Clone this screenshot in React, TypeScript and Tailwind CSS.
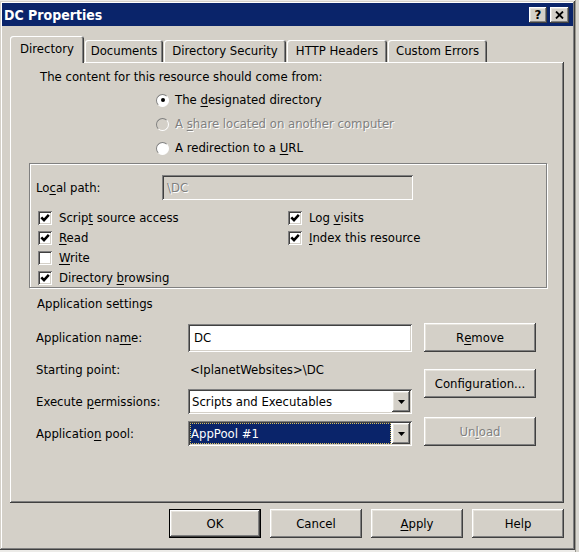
import type { ReactNode } from 'react'

// classic 3D edges
const raised =
  'shadow-[inset_-1px_-1px_0_#404040,inset_1px_1px_0_#ffffff,inset_-2px_-2px_0_#808080,inset_2px_2px_0_#e6e3dc]'
const sunken =
  'shadow-[inset_1px_1px_0_#808080,inset_-1px_-1px_0_#ffffff,inset_2px_2px_0_#404040,inset_-2px_-2px_0_#d4d0c8]'
const disabledText = 'text-[#808080] [text-shadow:1px_1px_0_#ffffff]'

function Key({ children }: { children: ReactNode }) {
  return <span className="underline underline-offset-[2px]">{children}</span>
}

function CheckBox({ checked, children }: { checked: boolean; children: ReactNode }) {
  return (
    <div className="h-5 flex items-center gap-[7px]">
      <span className={`w-[14px] h-[14px] bg-white flex items-center justify-center shrink-0 ${sunken}`}>
        {checked && (
          <svg width="10" height="10" viewBox="0 0 10 10">
            <path d="M1.3 4.3 L4 7.2 L8.8 1.8" stroke="#000" strokeWidth="2.5" fill="none" />
          </svg>
        )}
      </span>
      <span>{children}</span>
    </div>
  )
}

function Radio({ checked, disabled, children }: { checked?: boolean; disabled?: boolean; children: ReactNode }) {
  return (
    <div className="h-5 flex items-center gap-[6px] pl-[146px]">
      <span
        className={`w-[13px] h-[13px] rounded-full flex items-center justify-center shrink-0 border border-t-[#808080] border-l-[#808080] border-r-white border-b-white ${
          disabled ? 'bg-[#d4d0c8]' : 'bg-white'
        }`}
      >
        {checked && <span className="w-[4px] h-[4px] rounded-full bg-black" />}
      </span>
      <span className={disabled ? disabledText : ''}>{children}</span>
    </div>
  )
}

function Button({
  children,
  w = 'w-[92px]',
  isDefault,
  disabled,
}: {
  children: ReactNode
  w?: string
  isDefault?: boolean
  disabled?: boolean
}) {
  return (
    <div
      className={`${w} h-[29px] flex items-center justify-center bg-[#d4d0c8] ${
        isDefault ? 'border border-black' : ''
      } ${raised} ${disabled ? disabledText : ''}`}
    >
      {children}
    </div>
  )
}

function DropArrow() {
  return (
    <div className={`w-[18px] h-full flex items-center justify-center bg-[#d4d0c8] ${raised}`}>
      <svg width="7" height="4" viewBox="0 0 7 4">
        <path d="M0 0 H7 L3.5 4 Z" fill="#000" />
      </svg>
    </div>
  )
}

const tabs = [
  { label: 'Directory', w: 'w-[74px]' },
  { label: 'Documents', w: 'w-[78px]' },
  { label: 'Directory Security', w: 'w-[122px]' },
  { label: 'HTTP Headers', w: 'w-[100px]' },
  { label: 'Custom Errors', w: 'w-[99px]' },
]

export default function App() {
  return (
    <div className="relative w-[579px] h-[552px] overflow-hidden bg-[#ecebe8] font-['DejaVu_Sans_Condensed','Liberation_Sans',sans-serif] text-[13px] leading-4 text-black">
      {/* window behind, right edge */}
      <div className="absolute right-0 top-0 w-[4px] h-full border-l border-[#9a9890] bg-[#d8d6d0]" />

      <div className="relative mt-px w-[575px] h-[549px] p-[2px] flex flex-col bg-[#d4d0c8] shadow-[inset_-1px_-1px_0_#404040,inset_1px_1px_0_#d4d0c8,inset_-2px_-2px_0_#808080,inset_2px_2px_0_#ffffff]">
        {/* title bar */}
        <div className="h-[23px] shrink-0 bg-[#0a246a] flex items-center pl-[2px] pr-[4px]">
          <span className="text-white font-bold text-[14px]">DC Properties</span>
          <div className="ml-auto flex gap-[3px]">
            <div className={`w-[18px] h-[16px] bg-[#d4d0c8] flex items-center justify-center font-bold text-[13px] leading-none ${raised}`}>
              ?
            </div>
            <div className={`w-[19px] h-[16px] bg-[#d4d0c8] flex items-center justify-center ${raised}`}>
              <svg width="9" height="8" viewBox="0 0 9 8">
                <path d="M1 0.5 L8 7.5 M8 0.5 L1 7.5" stroke="#000" strokeWidth="1.8" />
              </svg>
            </div>
          </div>
        </div>

        {/* tab strip */}
        <div className="mt-[11px] ml-[8px] h-[25px] flex items-end gap-px">
          {tabs.map((t, i) =>
            i === 0 ? (
              <div
                key={t.label}
                className={`${t.w} relative z-10 -mb-px h-[27px] pb-[2px] flex items-center justify-center bg-[#d4d0c8] rounded-t-[3px] shadow-[inset_1px_1px_0_#ffffff,inset_-1px_0_0_#404040,inset_-2px_0_0_#808080]`}
              >
                {t.label}
              </div>
            ) : (
              <div
                key={t.label}
                className={`${t.w} h-[22px] flex items-center justify-center bg-[#d4d0c8] rounded-t-[3px] shadow-[inset_1px_1px_0_#ffffff,inset_-1px_0_0_#404040,inset_-2px_0_0_#808080]`}
              >
                {t.label}
              </div>
            ),
          )}
        </div>

        {/* tab page */}
        <div className="ml-[8px] w-[554px] h-[441px] shrink-0 flex flex-col bg-[#d4d0c8] shadow-[inset_-1px_-1px_0_#404040,inset_1px_1px_0_#ffffff,inset_-2px_-2px_0_#808080]">
          <div className="mt-[7px] pl-[30px]">The content for this resource should come from:</div>

          <div className="mt-[5px] flex flex-col gap-[4px]">
            <Radio checked>
              The <Key>d</Key>esignated directory
            </Radio>
            <Radio disabled>
              A <Key>s</Key>hare located on another computer
            </Radio>
            <Radio>
              A redirection to a <Key>U</Key>RL
            </Radio>
          </div>

          {/* path + access flags */}
          <div className="mt-[5px] ml-[19px] w-[518px] h-[125px] border border-[#808080] shadow-[inset_1px_1px_0_#ffffff,1px_1px_0_#ffffff] flex flex-col">
            <div className="mt-[11px] flex items-center">
              <span className="w-[132px] pl-[6px]">
                Lo<Key>c</Key>al path:
              </span>
              <div className={`w-[251px] h-[25px] flex items-center pl-[5px] bg-[#d4d0c8] ${sunken} ${disabledText}`}>
                \DC
              </div>
            </div>
            <div className="mt-[8px] grid grid-cols-[250px_1fr] pl-[8px]">
              <div className="flex flex-col">
                <CheckBox checked>
                  Scrip<Key>t</Key> source access
                </CheckBox>
                <CheckBox checked>
                  <Key>R</Key>ead
                </CheckBox>
                <CheckBox checked={false}>
                  <Key>W</Key>rite
                </CheckBox>
                <CheckBox checked>
                  Directory <Key>b</Key>rowsing
                </CheckBox>
              </div>
              <div className="flex flex-col">
                <CheckBox checked>
                  Log <Key>v</Key>isits
                </CheckBox>
                <CheckBox checked>
                  <Key>I</Key>ndex this resource
                </CheckBox>
              </div>
            </div>
          </div>

          <div className="mt-[8px] pl-[27px]">Application settings</div>

          <div className="mt-[11px] pl-[26px] flex">
            {/* labels and fields */}
            <div className="w-[388px] flex flex-col">
              <div className="h-[29px] flex items-center">
                <span className="w-[152px]">
                  Application na<Key>m</Key>e:
                </span>
                <div className={`w-[224px] h-[28px] bg-white flex items-center pl-[6px] ${sunken}`}>DC</div>
              </div>
              <div className="mt-[10px] h-4 flex items-center">
                <span className="w-[152px]">Starting point:</span>
                <span className="pl-[2px]">&lt;IplanetWebsites&gt;\DC</span>
              </div>
              <div className="mt-[11px] h-[25px] flex items-center">
                <span className="w-[152px]">
                  Execute <Key>p</Key>ermissions:
                </span>
                <div className={`w-[224px] h-[25px] bg-white flex items-stretch p-[2px] ${sunken}`}>
                  <span className="flex-1 flex items-center pl-[2px]">Scripts and Executables</span>
                  <DropArrow />
                </div>
              </div>
              <div className="mt-[7px] h-[25px] flex items-center">
                <span className="w-[152px]">
                  Applicatio<Key>n</Key> pool:
                </span>
                <div className={`w-[224px] h-[25px] bg-white flex items-stretch p-[2px] ${sunken}`}>
                  <span className="flex-1 mr-px flex items-center pl-px bg-[#0a246a] text-white outline-1 outline-dotted outline-[#d8c060] -outline-offset-1">
                    AppPool #1
                  </span>
                  <DropArrow />
                </div>
              </div>
            </div>

            {/* side buttons */}
            <div className="flex flex-col">
              <Button w="w-[112px]">
                R<Key>e</Key>move
              </Button>
              <div className="mt-[17px]">
                <Button w="w-[112px]">Configuration...</Button>
              </div>
              <div className="mt-[19px]">
                <Button w="w-[112px]" disabled>
                  Un<Key>l</Key>oad
                </Button>
              </div>
            </div>
          </div>
        </div>

        {/* dialog buttons */}
        <div className="mt-[6px] ml-[8px] w-[554px] flex justify-end gap-[9px]">
          <Button isDefault>OK</Button>
          <Button>Cancel</Button>
          <Button>
            <Key>A</Key>pply
          </Button>
          <Button>Help</Button>
        </div>
      </div>
    </div>
  )
}
